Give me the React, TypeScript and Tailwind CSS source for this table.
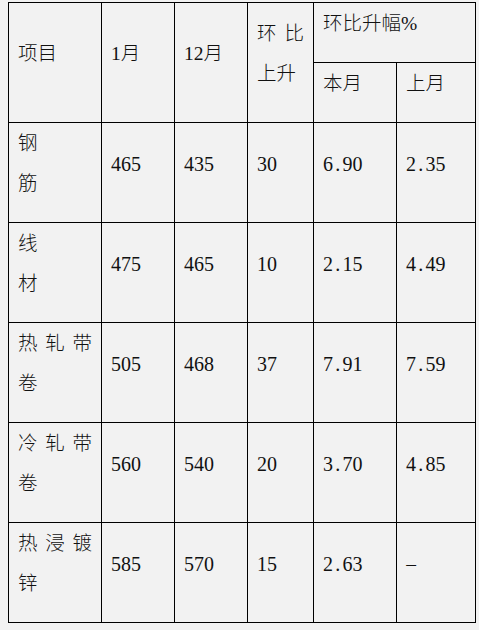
const rows = [
  { name: [['钢'], ['筋']], jan: '465', dec: '435', up: '30', cur: '6.90', prev: '2.35' },
  { name: [['线'], ['材']], jan: '475', dec: '465', up: '10', cur: '2.15', prev: '4.49' },
  { name: [['热', '轧', '带'], ['卷']], jan: '505', dec: '468', up: '37', cur: '7.91', prev: '7.59' },
  { name: [['冷', '轧', '带'], ['卷']], jan: '560', dec: '540', up: '20', cur: '3.70', prev: '4.85' },
  { name: [['热', '浸', '镀'], ['锌']], jan: '585', dec: '570', up: '15', cur: '2.63', prev: '-' },
]

// digits keep the half-width pitch, the dot gets a full digit cell like the original
function Num({ v }: { v: string }) {
  if (v === '-') return <span className="inline-block w-[10px] text-center">–</span>
  return (
    <span className="text-[20px]">
      {v.split('').map((c, i) =>
        c === '.' ? (
          <span key={i} className="inline-block w-[9.5px] text-center">.</span>
        ) : (
          <span key={i}>{c}</span>
        )
      )}
    </span>
  )
}

// each line spread across the cell, the last one left aligned
function Lines({ lines }: { lines: string[][] }) {
  return (
    <div className="flex w-full flex-col">
      {lines.map((l, i) => (
        <div
          key={i}
          className={i < lines.length - 1 && l.length > 1 ? 'flex justify-between' : 'flex'}
        >
          {l.map((c, j) => (
            <span key={j}>{c}</span>
          ))}
        </div>
      ))}
    </div>
  )
}

const cell = 'flex items-center bg-[#f2f2f2] px-[9px] pb-[18px]'

export default function App() {
  return (
    <div
      className="min-h-screen w-full bg-[#f2f2f2] pl-[8px] pt-[2px] text-[19.5px] font-light leading-[40px] text-[#111]"
      style={{ fontFamily: '"Liberation Serif", "Noto Sans CJK SC", serif' }}
    >
      <div className="grid w-[468px] grid-cols-[92px_72px_72px_65px_82px_78px] grid-rows-[59px_59px_99px_99px_99px_99px_99px] gap-px bg-black p-px">
        <div className={`${cell} row-span-2`}>项目</div>
        <div className={`${cell} row-span-2`}>1月</div>
        <div className={`${cell} row-span-2`}>12月</div>
        <div className={`${cell} row-span-2`}>
          <Lines lines={[['环', '比'], ['上', '升']]} />
        </div>
        <div className={`${cell} col-span-2`}>环比升幅%</div>
        <div className={cell}>本月</div>
        <div className={cell}>上月</div>

        {rows.map((r, i) => (
          <div key={i} className="contents">
            <div className={cell}>
              <Lines lines={r.name} />
            </div>
            <div className={cell}>
              <Num v={r.jan} />
            </div>
            <div className={cell}>
              <Num v={r.dec} />
            </div>
            <div className={cell}>
              <Num v={r.up} />
            </div>
            <div className={cell}>
              <Num v={r.cur} />
            </div>
            <div className={cell}>
              <Num v={r.prev} />
            </div>
          </div>
        ))}
      </div>
    </div>
  )
}
